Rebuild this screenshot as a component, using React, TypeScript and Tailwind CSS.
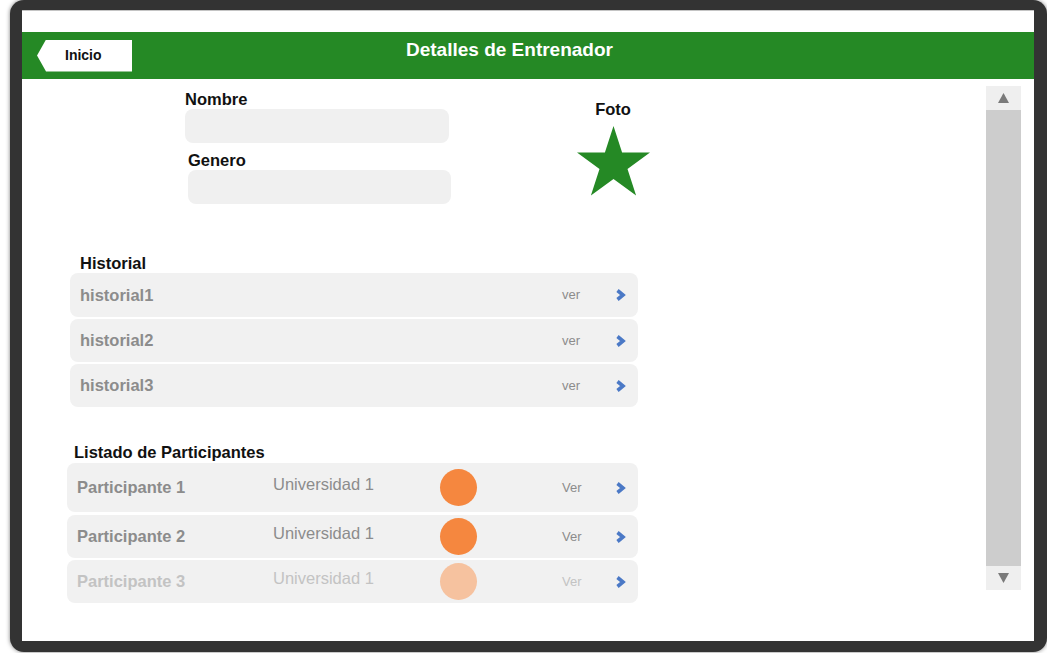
import { ReactNode } from 'react'

const font = { fontFamily: '"Liberation Sans", Arial, sans-serif' }

const Chevron = () => (
  <svg width="11" height="12" viewBox="0 0 11 12" className="shrink-0 -ml-[1px]">
    <polyline points="2.5,1.5 8,6 2.5,10.5" fill="none" stroke="#4b79c6" strokeWidth="3.6" strokeLinejoin="miter" />
  </svg>
)

const Star = () => (
  <svg width="73" height="70" viewBox="0 0 73 70">
    <polygon
      points="36.5,0 45.1,26.5 73,26.5 50.5,42.9 59.1,69.5 36.5,53.1 13.9,69.5 22.5,42.9 0,26.5 27.9,26.5"
      fill="#258925"
    />
  </svg>
)

const Arrow = ({ down = false }: { down?: boolean }) => (
  <svg width="11" height="10" viewBox="0 0 11 10">
    <polygon points={down ? '0,0 11,0 5.5,10' : '5.5,0 11,10 0,10'} fill="#7a7a7a" />
  </svg>
)

const Label = ({ children, className = '' }: { children: ReactNode; className?: string }) => (
  <div className={`text-[16.5px] leading-[19px] font-bold text-[#111] ${className}`}>{children}</div>
)

const historial = ['historial1', 'historial2', 'historial3']

const participantes = [
  { name: 'Participante 1', uni: 'Universidad 1', h: 'h-[49px]', faded: false },
  { name: 'Participante 2', uni: 'Universidad 1', h: 'h-[43px] mt-[3px]', faded: false },
  { name: 'Participante 3', uni: 'Universidad 1', h: 'h-[43px] mt-[2px]', faded: true },
]

export default function App() {
  return (
    <div className="w-[1047px] h-[653px] bg-white overflow-hidden" style={font}>
      <div className="ml-[10px] w-[1037px] h-[652px] bg-[#333] rounded-[14px] pt-[10px] pl-[12px] pr-[13px] pb-[11px] shadow-[0_0_4px_rgba(0,0,0,0.5)]">
        <div className="h-full bg-white border-t border-[#c4c4c4] flex flex-col">
          <div className="h-[21px]" />
          {/* header */}
          <div className="h-[47px] bg-[#258925] flex items-center">
            <div className="ml-[15px] w-[95px] h-[32px] bg-white flex items-center pl-[28px] text-[14px] font-bold text-[#111] [clip-path:polygon(9px_0,100%_0,100%_100%,9px_100%,0_50%)]">
              Inicio
            </div>
            <div className="self-start mt-[7px] ml-[274px] text-[19px] leading-[22px] font-bold text-white">
              Detalles de Entrenador
            </div>
          </div>

          <div className="flex-1 flex">
            {/* main */}
            <div className="w-[964px]">
              <div className="flex">
                <div className="ml-[163px] pt-[11px] w-[270px]">
                  <Label>Nombre</Label>
                  <div className="w-[264px] h-[34px] bg-[#f0f0f0] rounded-[8px]" />
                  <Label className="mt-[8px] ml-[3px]">Genero</Label>
                  <div className="ml-[3px] w-[263px] h-[34px] bg-[#f0f0f0] rounded-[8px]" />
                </div>
                <div className="ml-[118px] pt-[21px] w-[80px] flex flex-col items-center">
                  <Label>Foto</Label>
                  <div className="mt-[7px]">
                    <Star />
                  </div>
                </div>
              </div>

              {/* historial */}
              <Label className="mt-[50px] ml-[58px]">Historial</Label>
              <div className="ml-[48px] w-[568px] flex flex-col gap-[2px]">
                {historial.map((h, i) => (
                  <div key={h} className={`${i === 0 ? 'h-[44px]' : 'h-[43px]'} bg-[#f1f1f1] rounded-[8px] flex items-center pl-[10px]`}>
                    <div className="w-[482px] text-[16.5px] font-bold text-[#8c8c8c]">{h}</div>
                    <div className="w-[54px] text-[13px] text-[#8c8c8c]">ver</div>
                    <Chevron />
                  </div>
                ))}
              </div>

              {/* participantes */}
              <Label className="mt-[36px] ml-[52px]">Listado de Participantes</Label>
              <div className="mt-[1px] ml-[45px] w-[571px] flex flex-col">
                {participantes.map((p) => (
                  <div key={p.name} className={`${p.h} bg-[#f1f1f1] rounded-[8px] flex items-center pl-[10px]`}>
                    <div className={`w-[196px] text-[16.5px] font-bold ${p.faded ? 'text-[#c3c3c3]' : 'text-[#8c8c8c]'}`}>{p.name}</div>
                    <div className={`w-[167px] text-[16.5px] mb-[6px] ${p.faded ? 'text-[#c3c3c3]' : 'text-[#8c8c8c]'}`}>{p.uni}</div>
                    <div className={`w-[37px] h-[37px] rounded-full ${p.faded ? 'bg-[#f6c29f]' : 'bg-[#f5873f]'}`} />
                    <div className={`ml-[85px] w-[54px] text-[13px] ${p.faded ? 'text-[#c3c3c3]' : 'text-[#8c8c8c]'}`}>Ver</div>
                    <Chevron />
                  </div>
                ))}
              </div>
            </div>

            {/* scrollbar */}
            <div className="mt-[7px] w-[35px] h-[504px] flex flex-col">
              <div className="h-[24px] bg-[#efefef] flex items-center justify-center">
                <Arrow />
              </div>
              <div className="flex-1 bg-[#cdcdcd]" />
              <div className="h-[24px] bg-[#efefef] flex items-center justify-center">
                <Arrow down />
              </div>
            </div>
          </div>
        </div>
      </div>
    </div>
  )
}
